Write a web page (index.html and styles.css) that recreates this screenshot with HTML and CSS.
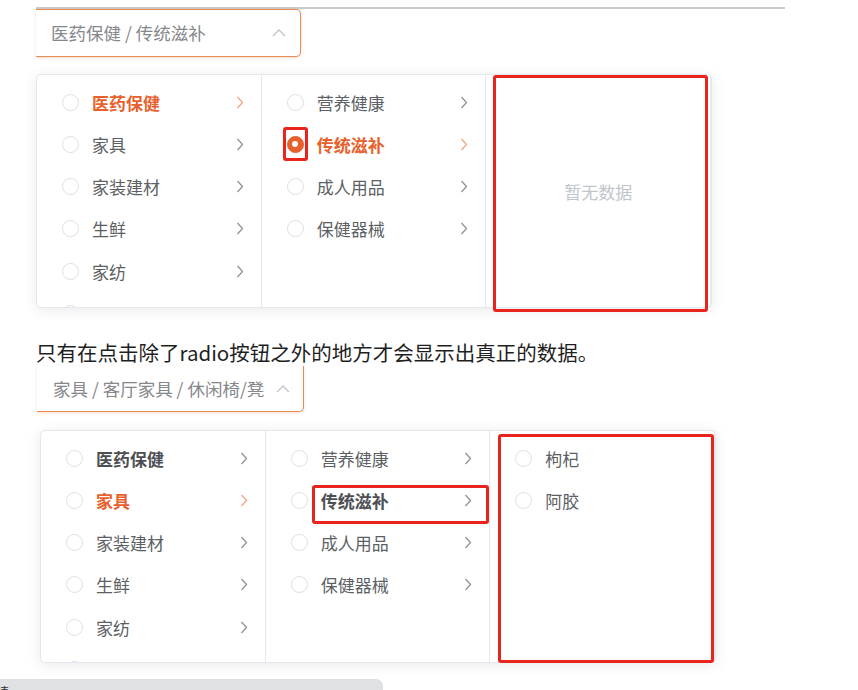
FILE: index.html
```html
<!DOCTYPE html>
<html lang="zh-CN">
<head>
  <meta charset="UTF-8" />
  <title>Cascader radio</title>
  <link rel="stylesheet" href="styles.css">
</head>
<body>
  <div class="rule"></div>

  <div class="shot shot-one">
    <div class="picker">
      <span class="picker-value">医药保健 / 传统滋补</span>
      <svg class="caret" width="14" height="8" viewBox="0 0 14 8"><path d="M1 7 L7 1 L13 7" /></svg>
    </div>

    <div class="menus">
      <div class="menu">
        <div class="node active"><span class="radio"></span><span class="label">医药保健</span><svg class="arrow" width="8" height="13" viewBox="0 0 8 13"><path d="M1.5 1 L6.5 6.5 L1.5 12" /></svg></div>
        <div class="node"><span class="radio"></span><span class="label">家具</span><svg class="arrow" width="8" height="13" viewBox="0 0 8 13"><path d="M1.5 1 L6.5 6.5 L1.5 12" /></svg></div>
        <div class="node"><span class="radio"></span><span class="label">家装建材</span><svg class="arrow" width="8" height="13" viewBox="0 0 8 13"><path d="M1.5 1 L6.5 6.5 L1.5 12" /></svg></div>
        <div class="node"><span class="radio"></span><span class="label">生鲜</span><svg class="arrow" width="8" height="13" viewBox="0 0 8 13"><path d="M1.5 1 L6.5 6.5 L1.5 12" /></svg></div>
        <div class="node"><span class="radio"></span><span class="label">家纺</span><svg class="arrow" width="8" height="13" viewBox="0 0 8 13"><path d="M1.5 1 L6.5 6.5 L1.5 12" /></svg></div>
        <div class="node"><span class="radio"></span></div>
      </div>
      <div class="menu">
        <div class="node"><span class="radio"></span><span class="label">营养健康</span><svg class="arrow" width="8" height="13" viewBox="0 0 8 13"><path d="M1.5 1 L6.5 6.5 L1.5 12" /></svg></div>
        <div class="node active"><span class="radio checked"></span><span class="label">传统滋补</span><svg class="arrow" width="8" height="13" viewBox="0 0 8 13"><path d="M1.5 1 L6.5 6.5 L1.5 12" /></svg></div>
        <div class="node"><span class="radio"></span><span class="label">成人用品</span><svg class="arrow" width="8" height="13" viewBox="0 0 8 13"><path d="M1.5 1 L6.5 6.5 L1.5 12" /></svg></div>
        <div class="node"><span class="radio"></span><span class="label">保健器械</span><svg class="arrow" width="8" height="13" viewBox="0 0 8 13"><path d="M1.5 1 L6.5 6.5 L1.5 12" /></svg></div>
      </div>
      <div class="menu menu-empty">暂无数据</div>

      <div class="mark mark-radio"></div>
      <div class="mark mark-empty"></div>
    </div>
  </div>

  <p class="note">只有在点击除了radio按钮之外的地方才会显示出真正的数据。</p>

  <div class="shot shot-two">
    <div class="picker">
      <span class="picker-value">家具 / 客厅家具 / 休闲椅/凳</span>
      <svg class="caret" width="14" height="8" viewBox="0 0 14 8"><path d="M1 7 L7 1 L13 7" /></svg>
    </div>

    <div class="menus">
      <div class="menu">
        <div class="node bold"><span class="radio"></span><span class="label">医药保健</span><svg class="arrow" width="8" height="13" viewBox="0 0 8 13"><path d="M1.5 1 L6.5 6.5 L1.5 12" /></svg></div>
        <div class="node active"><span class="radio"></span><span class="label">家具</span><svg class="arrow" width="8" height="13" viewBox="0 0 8 13"><path d="M1.5 1 L6.5 6.5 L1.5 12" /></svg></div>
        <div class="node"><span class="radio"></span><span class="label">家装建材</span><svg class="arrow" width="8" height="13" viewBox="0 0 8 13"><path d="M1.5 1 L6.5 6.5 L1.5 12" /></svg></div>
        <div class="node"><span class="radio"></span><span class="label">生鲜</span><svg class="arrow" width="8" height="13" viewBox="0 0 8 13"><path d="M1.5 1 L6.5 6.5 L1.5 12" /></svg></div>
        <div class="node"><span class="radio"></span><span class="label">家纺</span><svg class="arrow" width="8" height="13" viewBox="0 0 8 13"><path d="M1.5 1 L6.5 6.5 L1.5 12" /></svg></div>
        <div class="node"><span class="radio"></span></div>
      </div>
      <div class="menu">
        <div class="node"><span class="radio"></span><span class="label">营养健康</span><svg class="arrow" width="8" height="13" viewBox="0 0 8 13"><path d="M1.5 1 L6.5 6.5 L1.5 12" /></svg></div>
        <div class="node bold"><span class="radio"></span><span class="label">传统滋补</span><svg class="arrow" width="8" height="13" viewBox="0 0 8 13"><path d="M1.5 1 L6.5 6.5 L1.5 12" /></svg></div>
        <div class="node"><span class="radio"></span><span class="label">成人用品</span><svg class="arrow" width="8" height="13" viewBox="0 0 8 13"><path d="M1.5 1 L6.5 6.5 L1.5 12" /></svg></div>
        <div class="node"><span class="radio"></span><span class="label">保健器械</span><svg class="arrow" width="8" height="13" viewBox="0 0 8 13"><path d="M1.5 1 L6.5 6.5 L1.5 12" /></svg></div>
      </div>
      <div class="menu">
        <div class="node"><span class="radio"></span><span class="label">枸杞</span></div>
        <div class="node"><span class="radio"></span><span class="label">阿胶</span></div>
      </div>

      <div class="mark mark-node"></div>
      <div class="mark mark-leaf"></div>
    </div>
  </div>

  <div class="status"><span>请</span></div>
</body>
</html>
```

FILE: styles.css
```css
:root {
  --text: #5c5f64;
  --muted: #c0c4cc;
  --accent: #e8612c;
  --accent-light: #f2a487;
  --accent-border: #e98b52;
  --line: #e4e7ed;
  --mark: #e8241d;
}

* {
  box-sizing: border-box;
  margin: 0;
  padding: 0;
}

body {
  background: #fff;
  font-family: "Noto Sans CJK SC", "Noto Sans", sans-serif;
  color: #222;
  width: 858px;
  height: 690px;
  overflow: hidden;
}

.rule {
  margin: 7px 0 0 36px;
  width: 749px;
  height: 2px;
  background: #cbcbcb;
}

.picker {
  display: flex;
  align-items: center;
  background: #fff;
  border: 1px solid var(--accent-border);
  border-left: none;
  border-radius: 0 5px 5px 0;
  box-shadow: 0 1px 3px rgba(232, 120, 60, 0.25);
  color: #85878b;
  font-size: 17.5px;
  line-height: 20px;
}

.picker .caret {
  margin-left: auto;
  fill: none;
  stroke: var(--muted);
  stroke-width: 1.3;
}

.shot-one .picker {
  margin-left: 36px;
  width: 265px;
  height: 48px;
  padding: 0 14px 0 15px;
}

.shot-two .picker {
  margin-left: 37px;
  width: 267px;
  height: 46px;
  border-top: none;
  border-radius: 0 0 5px 0;
  padding: 0 13px 0 16px;
}

.menus {
  position: relative;
  display: flex;
  background: #fff;
  border: 1px solid var(--line);
  border-radius: 5px;
  box-shadow: 0 2px 14px rgba(0, 0, 0, 0.09);
  width: 676px;
}

.shot-one .menus {
  margin: 17px 0 0 36px;
  height: 234px;
}

.shot-two .menus {
  margin: 18px 0 0 40px;
  height: 233px;
}

.menu {
  width: 225px;
  padding-top: 6px;
  border-right: 1px solid var(--line);
  overflow: hidden;
}

.menu:last-of-type {
  border-right: none;
}

.menu-empty {
  display: flex;
  align-items: center;
  justify-content: center;
  padding-top: 0;
  color: var(--muted);
  font-size: 17px;
}

.node {
  display: flex;
  align-items: center;
  height: 42.25px;
  padding: 0 17px 0 25px;
  color: var(--text);
  font-size: 17px;
}

.radio {
  width: 17px;
  height: 17px;
  flex: none;
  border: 1px solid #dcdfe6;
  border-radius: 50%;
  background: #fff;
  margin-right: 13px;
  position: relative;
}

.radio.checked {
  background: var(--accent);
  border-color: var(--accent);
}

.radio.checked::after {
  content: "";
  position: absolute;
  left: 50%;
  top: 50%;
  width: 6px;
  height: 6px;
  margin: -3px 0 0 -3px;
  border-radius: 50%;
  background: #fff;
}

.arrow {
  margin-left: auto;
  fill: none;
  stroke: #909399;
  stroke-width: 1.3;
}

.node.active {
  color: var(--accent);
  font-weight: bold;
}

.node.active .arrow {
  stroke: var(--accent-light);
}

.node.bold {
  color: #4d4f53;
  font-weight: bold;
}

.mark {
  position: absolute;
  border: 3px solid var(--mark);
  border-radius: 3px;
}

.mark-radio {
  left: 246px;
  top: 52px;
  width: 25px;
  height: 34px;
}

.mark-empty {
  left: 456px;
  top: 0;
  width: 215px;
  height: 237px;
}

.mark-node {
  left: 271px;
  top: 54px;
  width: 177px;
  height: 39px;
}

.mark-leaf {
  left: 457px;
  top: 3px;
  width: 216px;
  height: 229px;
}

.note {
  margin: 30px 0 0 36px;
  height: 28px;
  font-size: 20.5px;
  line-height: 28px;
  color: #1f1f1f;
}

.status {
  margin-top: 16px;
  width: 383px;
  height: 14px;
  background: #dfe1e5;
  border-radius: 0 7px 0 0;
  overflow: hidden;
  font-size: 13px;
  line-height: 13px;
  color: #333;
}

.status span {
  display: block;
  margin: 6px 0 0 -4px;
}
```
